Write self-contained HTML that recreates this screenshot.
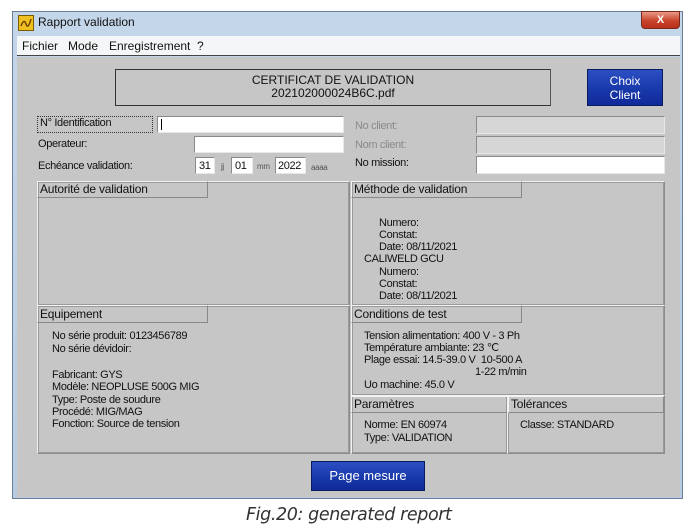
<!DOCTYPE html>
<html><head><meta charset="utf-8"><style>
*{margin:0;padding:0;box-sizing:border-box}
body{width:695px;height:531px;background:#fff;position:relative;overflow:hidden;font-family:"Liberation Sans",Arial,sans-serif;font-size:11px;color:#111}
.a{position:absolute}
.t{position:absolute;white-space:nowrap;font-size:11px;letter-spacing:-0.35px;line-height:12px}
.m{position:absolute;white-space:nowrap;font-size:12px;top:39px;font-family:"Liberation Sans",sans-serif}
.inp{position:absolute;background:#fff;border:1px solid #8a8a8a;border-right-color:#e8e8e8;border-bottom-color:#e8e8e8}
.dis{position:absolute;background:#d6d6d6;border:1px solid #8a8a8a;border-right-color:#e8e8e8;border-bottom-color:#e8e8e8}
.pan{position:absolute;border:1px solid #f2f2f2;border-right-color:#8c8c8c;border-bottom-color:#8c8c8c;outline:1px solid #9a9a9a;outline-offset:-2px}
.hd{position:absolute;border:1px solid #f4f4f4;border-right-color:#888;border-bottom-color:#888;font-size:12px;line-height:14px;padding-left:2px;letter-spacing:-0.2px}
.btn{position:absolute;background:linear-gradient(#2b4fc4,#1737a8 60%,#10289a);border:1px solid #0b1c5c;color:#fff;text-align:center;font-size:12px}
</style></head><body>
<div class="a" style="left:12px;top:11px;width:671px;height:488px;background:linear-gradient(#c4d6ea,#b7cce3);border:1px solid #6d7f95"></div>
<div class="a" style="left:18px;top:15px;width:16px;height:16px;background:#f0c020;border:1px solid #7a5b00"></div>
<svg class="a" style="left:19px;top:16px" width="14" height="14"><path d="M2 10 Q5 2 7 8 T12 3" stroke="#6a3f00" stroke-width="1.4" fill="none"/></svg>
<div class="t" style="left:38px;top:16px;font-size:12px;letter-spacing:0">Rapport validation</div>
<div class="a" style="left:641px;top:11px;width:39px;height:18px;background:linear-gradient(#e89a86,#c8432a 55%,#b8301c);border:1px solid #7a2a1c;border-radius:0 0 4px 4px;color:#fff;text-align:center;font-weight:bold;font-size:11px;line-height:16px">X</div>
<div class="a" style="left:17px;top:36px;width:663px;height:20px;background:#f5f6f7;border-bottom:1px solid #444"></div>
<div class="m" style="left:22px">Fichier</div>
<div class="m" style="left:68px">Mode</div>
<div class="m" style="left:109px">Enregistrement</div>
<div class="m" style="left:197px">?</div>
<div class="a" style="left:17px;top:57px;width:663px;height:440px;background:#c6c6c6"></div>
<div class="a" style="left:115px;top:69px;width:436px;height:37px;border:1px solid #333;border-right-color:#555;text-align:center;font-size:12px;line-height:13px;padding-top:4px">CERTIFICAT DE VALIDATION<br>202102000024B6C.pdf</div>
<div class="btn" style="left:587px;top:69px;width:76px;height:37px;line-height:14px;padding-top:4px">Choix<br>Client</div>
<div class="a" style="left:37px;top:116px;width:116px;height:17px;border:1px dotted #333"></div>
<div class="t" style="left:40px;top:117px">N° Identification</div>
<div class="inp" style="left:157px;top:116px;width:187px;height:17px"><div class="a" style="left:3px;top:2px;width:1px;height:11px;background:#000"></div></div>
<div class="t" style="left:38px;top:138px">Operateur:</div>
<div class="inp" style="left:194px;top:136px;width:150px;height:17px"></div>
<div class="t" style="left:38px;top:160px">Echéance validation:</div>
<div class="inp" style="left:195px;top:157px;width:20px;height:17px"></div><div class="t" style="left:199px;top:160px">31</div>
<div class="t" style="left:221px;top:161px;font-size:8px;color:#555">jj</div>
<div class="inp" style="left:231px;top:157px;width:22px;height:17px"></div><div class="t" style="left:235px;top:160px">01</div>
<div class="t" style="left:257px;top:161px;font-size:8px;color:#555">mm</div>
<div class="inp" style="left:275px;top:157px;width:31px;height:17px"></div><div class="t" style="left:278px;top:160px">2022</div>
<div class="t" style="left:311px;top:162px;font-size:8px;color:#555">aaaa</div>
<div class="t" style="left:355px;top:120px;color:#8a8a8a">No client:</div>
<div class="dis" style="left:476px;top:116px;width:189px;height:18px"></div>
<div class="t" style="left:355px;top:139px;color:#8a8a8a">Nom client:</div>
<div class="dis" style="left:476px;top:136px;width:189px;height:18px"></div>
<div class="t" style="left:355px;top:157px">No mission:</div>
<div class="inp" style="left:476px;top:156px;width:189px;height:18px"></div>
<div class="pan" style="left:37px;top:181px;width:313px;height:125px"></div>
<div class="hd" style="left:37px;top:181px;width:171px;height:17px">Autorité de validation</div>
<div class="pan" style="left:351px;top:181px;width:314px;height:125px"></div>
<div class="hd" style="left:351px;top:181px;width:171px;height:17px">Méthode de validation</div>
<div class="t" style="left:379px;top:217px;line-height:12.2px">Numero:<br>Constat:<br>Date: 08/11/2021</div>
<div class="t" style="left:364px;top:253px">CALIWELD GCU</div>
<div class="t" style="left:379px;top:266px;line-height:12.2px">Numero:<br>Constat:<br>Date: 08/11/2021</div>
<div class="pan" style="left:37px;top:305px;width:313px;height:149px"></div>
<div class="hd" style="left:37px;top:305px;width:171px;height:18px;line-height:16px">Equipement</div>
<div class="t" style="left:52px;top:330px;line-height:12.5px">No série produit: 0123456789<br>No série dévidoir:</div>
<div class="t" style="left:52px;top:369px;line-height:12.3px">Fabricant: GYS<br>Modèle: NEOPLUSE 500G MIG<br>Type: Poste de soudure<br>Procédé: MIG/MAG<br>Fonction: Source de tension</div>
<div class="pan" style="left:351px;top:305px;width:314px;height:91px"></div>
<div class="hd" style="left:351px;top:305px;width:171px;height:18px;line-height:16px">Conditions de test</div>
<div class="t" style="left:364px;top:330px;line-height:12.2px">Tension alimentation: 400 V - 3 Ph<br>Température ambiante: 23 ℃<br>Plage essai: 14.5-39.0 V&nbsp; 10-500 A</div>
<div class="t" style="left:475px;top:366px">1-22 m/min</div>
<div class="t" style="left:364px;top:379px">Uo machine: 45.0 V</div>
<div class="pan" style="left:351px;top:395px;width:157px;height:59px"></div>
<div class="hd" style="left:351px;top:396px;width:157px;height:17px">Paramètres</div>
<div class="t" style="left:364px;top:419px;line-height:12.5px">Norme: EN 60974<br>Type: VALIDATION</div>
<div class="pan" style="left:507px;top:395px;width:158px;height:59px"></div>
<div class="hd" style="left:508px;top:396px;width:156px;height:17px">Tolérances</div>
<div class="t" style="left:520px;top:419px">Classe: STANDARD</div>
<div class="btn" style="left:311px;top:461px;width:114px;height:30px;line-height:28px;font-size:13px">Page mesure</div>
<div class="t" style="left:246px;top:504px;font-family:'DejaVu Sans',sans-serif;font-style:italic;font-size:17.5px;line-height:22px;letter-spacing:-0.4px;color:#333">Fig.20: generated report</div>
</body></html>
